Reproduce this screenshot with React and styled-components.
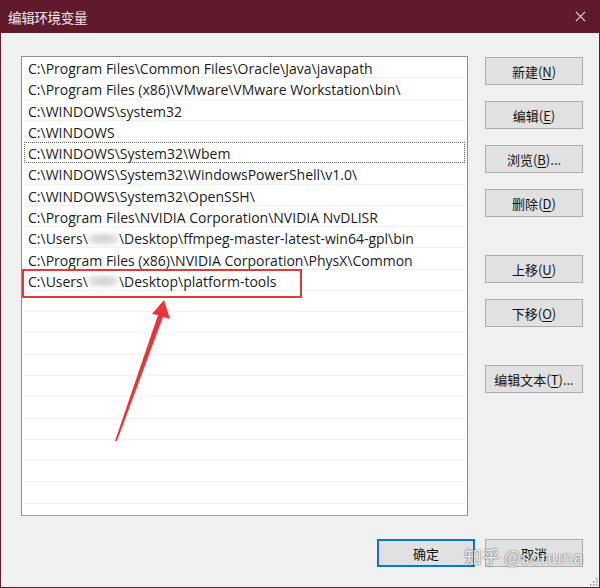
import React from 'react';
import styled, { createGlobalStyle } from 'styled-components';

const paths = [
  { text: 'C:\\Program Files\\Common Files\\Oracle\\Java\\javapath' },
  { text: 'C:\\Program Files (x86)\\VMware\\VMware Workstation\\bin\\' },
  { text: 'C:\\WINDOWS\\system32' },
  { text: 'C:\\WINDOWS' },
  { text: 'C:\\WINDOWS\\System32\\Wbem', focused: true },
  { text: 'C:\\WINDOWS\\System32\\WindowsPowerShell\\v1.0\\' },
  { text: 'C:\\WINDOWS\\System32\\OpenSSH\\' },
  { text: 'C:\\Program Files\\NVIDIA Corporation\\NVIDIA NvDLISR' },
  { user: true, before: 'C:\\Users\\', after: '\\Desktop\\ffmpeg-master-latest-win64-gpl\\bin' },
  { text: 'C:\\Program Files (x86)\\NVIDIA Corporation\\PhysX\\Common' },
  { user: true, before: 'C:\\Users\\', after: '\\Desktop\\platform-tools' },
];

const EMPTY_ROWS = 11;

const sideButtons = [
  { label: '新建', key: 'N', gap: 0 },
  { label: '编辑', key: 'E', gap: 16 },
  { label: '浏览', key: 'B', more: true, gap: 16 },
  { label: '删除', key: 'D', gap: 16 },
  { label: '上移', key: 'U', gap: 38 },
  { label: '下移', key: 'O', gap: 16 },
  { label: '编辑文本', key: 'T', more: true, gap: 38 },
];

const GlobalStyle = createGlobalStyle`
  html, body {
    margin: 0;
    padding: 0;
    background: #f0f0f0;
  }
  body {
    font-family: "Open Sans", "Noto Sans CJK SC", sans-serif;
  }
`;

export default function App() {
  return (
    <>
      <GlobalStyle />
      <Window>
        <TitleBar>
          <Title>编辑环境变量</Title>
          <CloseIcon viewBox="0 0 12 12">
            <path d="M1 1 L11 11 M11 1 L1 11" stroke="#f4e6ea" strokeWidth="1.1" />
          </CloseIcon>
        </TitleBar>
        <Body>
          <Main>
            <List>
              {paths.map((p, i) => (
                <Row key={i} $focused={p.focused}>
                  {p.user ? (
                    <>
                      {p.before}
                      <Smudge />
                      {p.after}
                    </>
                  ) : (
                    p.text
                  )}
                </Row>
              ))}
              {Array.from({ length: EMPTY_ROWS }).map((_, i) => (
                <Row key={`e${i}`} />
              ))}
              <Highlight />
              <Arrow viewBox="0 0 446 458" width="446" height="458">
                <polygon
                  points="142,243 148,262 141,260 95,384 93,384 136,258 130,257"
                  fill="#e8353b"
                />
              </Arrow>
            </List>
            <SideButtons>
              {sideButtons.map((b) => (
                <Button key={b.key} $gap={b.gap}>
                  {b.label}(<u>{b.key}</u>){b.more ? '...' : ''}
                </Button>
              ))}
            </SideButtons>
          </Main>
          <Footer>
            <Button $primary>确定</Button>
            <Button>取消</Button>
          </Footer>
        </Body>
        <Watermark>知乎 @sonuna</Watermark>
        <Grip viewBox="0 0 10 10">
          {[[8, 2], [8, 5], [5, 5], [8, 8], [5, 8], [2, 8]].map(([x, y]) => (
            <rect key={`${x}-${y}`} x={x} y={y} width="1.5" height="1.5" fill="#9a9a9a" />
          ))}
        </Grip>
      </Window>
    </>
  );
}

const Window = styled.div`
  position: relative;
  width: 600px;
  height: 588px;
  box-sizing: border-box;
  display: flex;
  flex-direction: column;
  background: #f0f0f0;
  border: 1px solid #5f1a2c;
  border-top: none;
  overflow: hidden;
`;
const TitleBar = styled.div`
  height: 33px;
  flex: none;
  display: flex;
  align-items: center;
  justify-content: space-between;
  padding: 0 13px 0 7px;
  background: #601a2c;
`;
const Title = styled.span`
  font-family: "Noto Sans CJK SC", sans-serif;
  font-size: 13.5px;
  color: #f6e8ec;
  letter-spacing: -0.3px;
`;
const CloseIcon = styled.svg`
  width: 11px;
  height: 11px;
`;
const Body = styled.div`
  flex: 1;
  display: flex;
  flex-direction: column;
  padding: 23px 16px 0 20px;
`;
const Main = styled.div`
  display: flex;
  gap: 17px;
`;
const List = styled.div`
  position: relative;
  width: 447px;
  height: 460px;
  box-sizing: border-box;
  border: 1px solid #8e8e8e;
  border-bottom-color: #9d9d9d;
  background: #fff;
  padding: 0 2px;
  overflow: hidden;
`;
const Row = styled.div`
  height: 21.27px;
  box-sizing: border-box;
  display: flex;
  align-items: center;
  padding: 3px 0 0 4px;
  font-size: 14px;
  color: #1c1c1c;
  white-space: nowrap;
  border-bottom: 1px solid #f0f0f0;
  outline: ${({ $focused }) => ($focused ? '1px dotted #6a6a6a' : 'none')};
  outline-offset: -1px;
`;
const Smudge = styled.span`
  display: inline-block;
  flex: none;
  width: 31px;
  height: 10px;
  background: linear-gradient(90deg, #e6e6e6, #d2d2d2 50%, #e8e8e8);
  border-radius: 5px;
  filter: blur(2px);
`;
const Highlight = styled.div`
  position: absolute;
  left: 0;
  top: 212px;
  width: 280px;
  height: 29px;
  box-sizing: border-box;
  border: 2px solid #de3a3f;
`;
const Arrow = styled.svg`
  position: absolute;
  left: 0;
  top: 0;
`;
const SideButtons = styled.div`
  display: flex;
  flex-direction: column;
  padding-top: 1px;
`;
const Button = styled.button`
  width: 98px;
  height: 28px;
  box-sizing: border-box;
  margin-top: ${({ $gap }) => ($gap || 0)}px;
  padding: 0;
  font-family: "Noto Sans CJK SC", sans-serif;
  font-size: 13px;
  color: #111;
  background: #e1e1e1;
  border: ${({ $primary }) => ($primary ? '2px solid #0a74d0' : '1px solid #adadad')};
  u {
    text-underline-offset: 2px;
  }
`;
const Footer = styled.div`
  display: flex;
  justify-content: flex-end;
  gap: 10px;
  margin-top: 23px;
`;
const Watermark = styled.div`
  position: absolute;
  left: 463px;
  top: 543px;
  font-family: "Noto Sans CJK SC", sans-serif;
  font-size: 18px;
  color: rgba(255, 255, 255, 0.92);
  text-shadow: 0 0 2px rgba(0, 0, 0, 0.55), 0 0 1px rgba(0, 0, 0, 0.4);
  white-space: nowrap;
`;
const Grip = styled.svg`
  position: absolute;
  right: 1px;
  bottom: 1px;
  width: 10px;
  height: 10px;
`;
